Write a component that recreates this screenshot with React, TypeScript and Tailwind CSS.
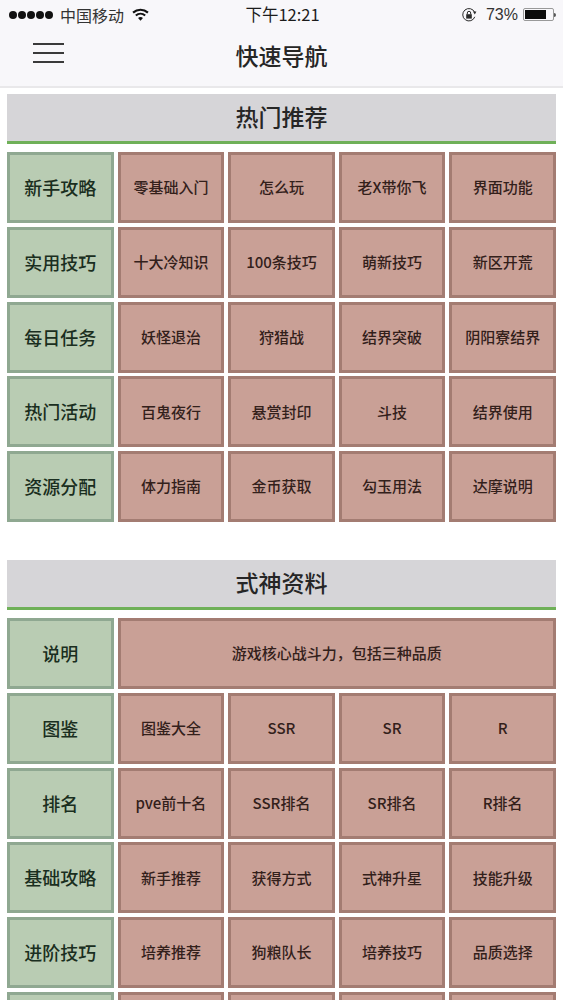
const sections = [
  {
    title: "热门推荐",
    rows: [
      { label: "新手攻略", items: ["零基础入门", "怎么玩", "老X带你飞", "界面功能"] },
      { label: "实用技巧", items: ["十大冷知识", "100条技巧", "萌新技巧", "新区开荒"] },
      { label: "每日任务", items: ["妖怪退治", "狩猎战", "结界突破", "阴阳寮结界"] },
      { label: "热门活动", items: ["百鬼夜行", "悬赏封印", "斗技", "结界使用"] },
      { label: "资源分配", items: ["体力指南", "金币获取", "勾玉用法", "达摩说明"] },
    ],
  },
  {
    title: "式神资料",
    rows: [
      { label: "说明", wide: "游戏核心战斗力，包括三种品质", items: [] },
      { label: "图鉴", items: ["图鉴大全", "SSR", "SR", "R"] },
      { label: "排名", items: ["pve前十名", "SSR排名", "SR排名", "R排名"] },
      { label: "基础攻略", items: ["新手推荐", "获得方式", "式神升星", "技能升级"] },
      { label: "进阶技巧", items: ["培养推荐", "狗粮队长", "培养技巧", "品质选择"] },
      { label: "", items: ["", "", "", ""] },
    ],
  },
];

const font = "font-['Noto_Sans_CJK_SC','Liberation_Sans',sans-serif]";

function Wifi() {
  return (
    <svg width="17" height="13" viewBox="0 0 16 12" className="ml-[8px]" fill="none" stroke="#111">
      <path d="M1 4.2C5 0.6 11 0.6 15 4.2" strokeWidth="2" />
      <path d="M3.6 6.9C6.2 4.7 9.8 4.7 12.4 6.9" strokeWidth="2" />
      <path d="M8 11.8L5.7 9.2C7 8.2 9 8.2 10.3 9.2Z" fill="#111" stroke="none" />
    </svg>
  );
}

function RotationLock() {
  return (
    <svg width="16" height="16" viewBox="0 0 16 16" fill="none" stroke="#2a2a2a">
      <path d="M13.8 9.8A6.2 6.2 0 1 1 13.6 5.2" strokeWidth="1" />
      <path d="M12 4.6L15.4 4.6L13.8 7.4Z" fill="#2a2a2a" stroke="none" />
      <rect x="5.2" y="7.2" width="5.6" height="4.4" fill="#2a2a2a" stroke="none" />
      <path d="M6.3 7.2V6A1.7 1.7 0 0 1 9.7 6V7.2" strokeWidth="1" />
    </svg>
  );
}

function StatusBar() {
  return (
    <div className={`${font} grid h-[29px] grid-cols-3 items-center pr-[7px] pl-[9px] text-[16px] text-[#333]`}>
      <div className="flex items-center">
        <div className="flex gap-[1px]">
          {[0, 1, 2, 3, 4].map((i) => (
            <span key={i} className="h-[8px] w-[8px] rounded-full bg-[#111]" />
          ))}
        </div>
        <span className="ml-[7px] whitespace-nowrap">中国移动</span>
        <Wifi />
      </div>
      <div className="text-center text-[16.5px] whitespace-nowrap text-[#1c1c1c]">下午12:21</div>
      <div className="flex items-center justify-end">
        <RotationLock />
        <span className="ml-[9px] font-['Liberation_Sans',sans-serif] text-[16px]">73%</span>
        <div className="ml-[5px] flex h-[13px] w-[31px] items-center rounded-[2px] border border-[#999] p-[1px]">
          <div className="h-full w-[21px] bg-[#0c0c0c]" />
        </div>
        <div className="h-[4px] w-[2px] rounded-r-sm bg-[#555]" />
      </div>
    </div>
  );
}

function NavBar() {
  return (
    <div className="grid h-[59px] grid-cols-3 items-center border-b-2 border-[#e9e8ea]">
      <div className="flex flex-col gap-[7px] pb-[9px] pl-[33px]">
        <span className="h-[2px] w-[31px] bg-[#3a3a3a]" />
        <span className="h-[2px] w-[31px] bg-[#3a3a3a]" />
        <span className="h-[2px] w-[31px] bg-[#3a3a3a]" />
      </div>
      <h1 className={`${font} pb-[5px] text-center text-[23px] font-medium whitespace-nowrap text-[#262626]`}>快速导航</h1>
    </div>
  );
}

function LabelCell({ text }: { text: string }) {
  return (
    <div className="flex h-[71px] items-center justify-center border-[3px] border-[#8fa891] bg-[#b9ccb3] text-[18px] font-medium text-[#1a2e20]">
      {text}
    </div>
  );
}

function LinkCell({ text, wide }: { text: string; wide?: boolean }) {
  return (
    <div
      className={`flex h-[71px] items-center justify-center border-[3px] border-[#a37c72] bg-[#c9a096] text-[15px] font-medium text-[#33201b] ${
        wide ? "col-span-4" : ""
      }`}
    >
      {text}
    </div>
  );
}

export default function App() {
  return (
    <div className={`${font} h-[1000px] w-[563px] overflow-hidden bg-white`}>
      <div className="bg-[#f8f7fa]">
        <StatusBar />
        <NavBar />
      </div>
      <div className="flex flex-col gap-[38px] px-[7px] pt-[6px]">
        {sections.map((s) => (
          <section key={s.title}>
            <div className="mb-[8px] flex h-[50px] items-center justify-center border-b-[3px] border-[#6fb058] bg-[#d6d5d8] pb-[2px] text-[23px] font-medium text-[#262626]">
              {s.title}
            </div>
            <div className="grid grid-cols-5 gap-x-[4px] gap-y-[3.75px]">
              {s.rows.map((r, i) => (
                <div key={i} className="contents">
                  <LabelCell text={r.label} />
                  {r.wide ? <LinkCell text={r.wide} wide /> : r.items.map((t, j) => <LinkCell key={j} text={t} />)}
                </div>
              ))}
            </div>
          </section>
        ))}
      </div>
    </div>
  );
}
